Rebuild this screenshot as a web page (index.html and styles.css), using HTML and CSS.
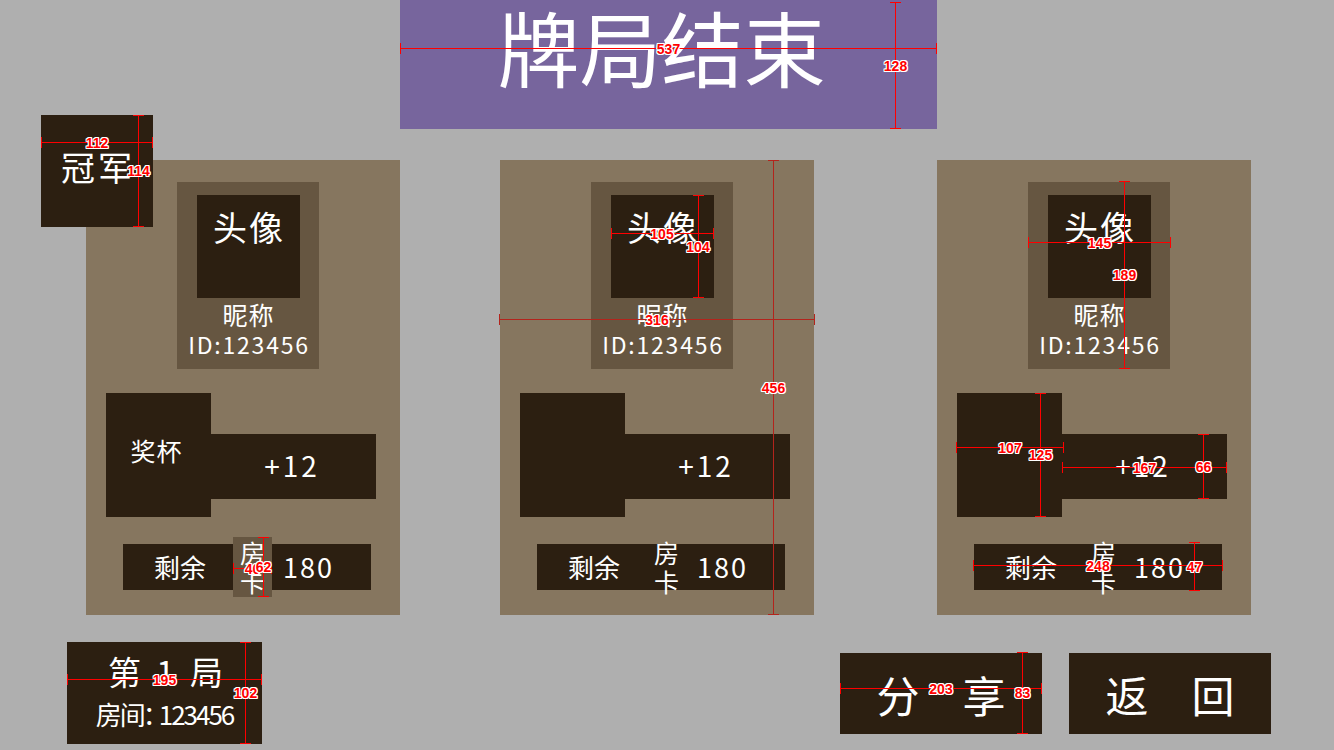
FILE: index.html
```html
<!DOCTYPE html>
<html lang="zh-CN">
<head>
<meta charset="utf-8">
<title>牌局结束</title>
<link rel="stylesheet" href="styles.css">
</head>
<body>
<div class="screen">
  <header class="title-bar">
    <h1 class="title">牌局结束</h1>
    <span class="dim dim-h dim-title-w"><b class="dim-label">537</b></span>
    <span class="dim dim-v dim-title-h"><b class="dim-label">128</b></span>
  </header>

  <main class="cards">
    <section class="card">
      <div class="badge">冠军
        <span class="dim dim-h dim-badge-w"><b class="dim-label">112</b></span>
        <span class="dim dim-v dim-badge-h"><b class="dim-label">114</b></span>
      </div>
      <div class="profile">
        <div class="avatar">头像</div>
        <div class="nickname">昵称</div>
        <div class="player-id">ID:123456</div>
      </div>
      <div class="stats">
        <div class="trophy"><span class="trophy-label">奖杯</span></div>
        <div class="score">+12</div>
      </div>
      <div class="remain-bar">
        <span class="remain">剩余</span>
        <span class="card-tag is-selected">房<br>卡
          <span class="dim dim-h dim-tag-w"><b class="dim-label">40</b></span>
          <span class="dim dim-v dim-tag-h"><b class="dim-label">62</b></span>
        </span>
        <span class="count">180</span>
      </div>
    </section>

    <section class="card card-mid">
      <div class="profile">
        <div class="avatar">头像
          <span class="dim dim-h dim-avatar-w"><b class="dim-label">105</b></span>
          <span class="dim dim-v dim-avatar-h"><b class="dim-label">104</b></span>
        </div>
        <div class="nickname">昵称</div>
        <div class="player-id">ID:123456</div>
      </div>
      <div class="stats">
        <div class="trophy"></div>
        <div class="score">+12</div>
      </div>
      <div class="remain-bar">
        <span class="remain">剩余</span>
        <span class="card-tag">房<br>卡</span>
        <span class="count">180</span>
      </div>
      <span class="dim dim-h dim-dark dim-card-w"><b class="dim-label">316</b></span>
      <span class="dim dim-v dim-dark dim-card-h"><b class="dim-label">456</b></span>
    </section>

    <section class="card card-right">
      <div class="profile">
        <div class="avatar">头像</div>
        <div class="nickname">昵称</div>
        <div class="player-id">ID:123456</div>
        <span class="dim dim-h dim-profile-w"><b class="dim-label">145</b></span>
        <span class="dim dim-v dim-profile-h"><b class="dim-label">189</b></span>
      </div>
      <div class="stats">
        <div class="trophy">
          <span class="dim dim-h dim-trophy-w"><b class="dim-label">107</b></span>
          <span class="dim dim-v dim-trophy-h"><b class="dim-label">125</b></span>
        </div>
        <div class="score">+12
          <span class="dim dim-h dim-score-w"><b class="dim-label">167</b></span>
          <span class="dim dim-v dim-score-h"><b class="dim-label">66</b></span>
        </div>
      </div>
      <div class="remain-bar">
        <span class="remain">剩余</span>
        <span class="card-tag">房<br>卡</span>
        <span class="count">180</span>
        <span class="dim dim-h dim-bar-w"><b class="dim-label">248</b></span>
        <span class="dim dim-v dim-bar-h"><b class="dim-label">47</b></span>
      </div>
    </section>
  </main>

  <footer class="footer">
    <div class="round">
      <div class="round-no">第 1 局</div>
      <div class="room-no">房间<span class="colon">：</span>123456</div>
      <span class="dim dim-h dim-round-w"><b class="dim-label">195</b></span>
      <span class="dim dim-v dim-round-h"><b class="dim-label">102</b></span>
    </div>
    <button class="btn btn-share">分　享
      <span class="dim dim-h dim-btn-w"><b class="dim-label">203</b></span>
      <span class="dim dim-v dim-btn-h"><b class="dim-label">83</b></span>
    </button>
    <button class="btn btn-back">返　回</button>
  </footer>
</div>
</body>
</html>
```

FILE: styles.css
```css
* { box-sizing: border-box; margin: 0; padding: 0; }
html, body { width: 1334px; height: 750px; overflow: hidden; }
body {
  background: #afafaf;
  color: #fff;
  font-family: "Noto Sans CJK SC", "Noto Sans", sans-serif;
}
.screen {
  display: flex;
  flex-direction: column;
  align-items: flex-start;
  width: 1334px;
  height: 750px;
}

/* title */
.title-bar {
  position: relative;
  margin-left: 400px;
  width: 537px;
  height: 129px;
  background: #77659d;
}
.title {
  font-size: 82px;
  font-weight: 400;
  line-height: 90px;
  padding-top: 1px;
  padding-right: 14px;
  text-align: center;
}

/* cards */
.cards {
  display: flex;
  margin-top: 31px;
  padding-left: 86px;
}
.card {
  position: relative;
  width: 314px;
  height: 455px;
  background: #86765f;
  padding-top: 22px;
}
.card-mid { margin-left: 100px; }
.card-right { margin-left: 123px; }

.badge {
  position: absolute;
  left: -45px;
  top: -45px;
  width: 112px;
  height: 112px;
  background: #2c1f11;
  display: flex;
  align-items: center;
  justify-content: center;
  font-size: 34px;
  line-height: 40px;
  letter-spacing: 3px;
  padding-left: 2px;
  padding-bottom: 8px;
  z-index: 2;
}

.profile {
  position: relative;
  margin-left: 91px;
  width: 142px;
  height: 187px;
  background: #665641;
  padding-top: 13px;
  display: flex;
  flex-direction: column;
  align-items: center;
}
.avatar {
  position: relative;
  width: 103px;
  height: 103px;
  background: #2c1f11;
  font-size: 34px;
  line-height: 34px;
  padding-top: 15px;
  padding-left: 2px;
  letter-spacing: 2px;
  text-align: center;
}
.nickname {
  margin-top: 1px;
  font-size: 25px;
  line-height: 30px;
  letter-spacing: 1px;
  padding-left: 1px;
}
.player-id {
  font-size: 23px;
  line-height: 30px;
  letter-spacing: 1.8px;
  padding-left: 2px;
}

.stats {
  display: flex;
  align-items: flex-start;
  margin-left: 20px;
  margin-top: 24px;
}
.trophy {
  position: relative;
  width: 105px;
  height: 124px;
  background: #2c1f11;
  padding-top: 42px;
  padding-right: 4px;
  text-align: center;
  font-size: 25px;
  line-height: 30px;
  letter-spacing: 1px;
}
.score {
  position: relative;
  width: 165px;
  height: 65px;
  margin-top: 41px;
  background: #2c1f11;
  display: flex;
  align-items: center;
  justify-content: center;
  font-size: 28px;
  line-height: 34px;
  letter-spacing: 3px;
  padding-right: 3px;
  padding-bottom: 4px;
}

.remain-bar {
  position: relative;
  display: flex;
  align-items: center;
  margin-left: 37px;
  margin-top: 27px;
  width: 248px;
  height: 46px;
  background: #2c1f11;
}
.remain {
  margin-left: 31px;
  font-size: 26px;
  line-height: 30px;
}
.card-tag {
  position: relative;
  flex: none;
  width: 39px;
  height: 60px;
  margin-left: 27px;
  padding-top: 1px;
  font-size: 25px;
  line-height: 29px;
  text-align: center;
}
.card-tag.is-selected { background: #665641; }
.count {
  margin-left: 11px;
  font-size: 27px;
  line-height: 30px;
  letter-spacing: 2px;
}

/* footer */
.footer {
  display: flex;
  align-items: flex-start;
  margin-top: 27px;
}
.round {
  position: relative;
  margin-left: 67px;
  width: 195px;
  height: 102px;
  background: #2c1f11;
  display: flex;
  flex-direction: column;
  align-items: center;
  padding-top: 9px;
}
.round-no {
  font-size: 33px;
  line-height: 40px;
  letter-spacing: 4px;
  padding-left: 6px;
}
.room-no {
  margin-top: 7px;
  font-size: 26px;
  line-height: 32px;
  letter-spacing: -2px;
}
.colon { margin-left: -1px; margin-right: -8px; }
.btn {
  position: relative;
  width: 202px;
  height: 81px;
  margin-top: 11px;
  border: 0;
  background: #2c1f11;
  color: #fff;
  font-family: inherit;
  font-size: 43px;
  line-height: 50px;
  display: flex;
  align-items: center;
  justify-content: center;
}
.btn-share { margin-left: 578px; }
.btn-back { margin-left: 27px; }

/* measurement overlay */
.dim {
  position: absolute;
  background: #f00;
  z-index: 5;
}
.dim-h { height: 1px; left: 0; right: 0; }
.dim-v { width: 1px; top: 0; bottom: 0; }
.dim-h::before, .dim-h::after {
  content: "";
  position: absolute;
  top: -5px;
  width: 1px;
  height: 11px;
  background: inherit;
}
.dim-h::before { left: 0; }
.dim-h::after { right: 0; }
.dim-v::before, .dim-v::after {
  content: "";
  position: absolute;
  left: -5px;
  width: 11px;
  height: 1px;
  background: inherit;
}
.dim-v::before { top: 0; }
.dim-v::after { bottom: 0; }
.dim-dark { background: #b3241c; }
.dim-label {
  position: absolute;
  left: 50%;
  top: 50%;
  transform: translate(-50%, -50%);
  font-family: "Liberation Sans", sans-serif;
  font-size: 14px;
  font-weight: 700;
  line-height: 1;
  letter-spacing: 0;
  color: #f00;
  white-space: nowrap;
  text-shadow: -1px 0 #fff, 1px 0 #fff, 0 -1px #fff, 0 1px #fff,
               -1px -1px #fff, 1px 1px #fff, -1px 1px #fff, 1px -1px #fff;
}

.dim-title-w { top: 48px; }
.dim-title-h { left: 495px; top: 2px; }
.dim-badge-w { top: 27px; }
.dim-badge-h { left: 97px; }
.dim-tag-w { top: 31px; }
.dim-tag-h { left: 30px; }
.dim-avatar-w { top: 38px; }
.dim-avatar-h { left: 87px; }
.dim-card-w { top: 159px; left: -1px; right: -1px; }
.dim-card-h { left: 273px; }
.dim-profile-w { top: 60px; right: -1px; }
.dim-profile-h { left: 96px; top: -1px; }
.dim-trophy-w { top: 54px; left: -1px; right: -2px; }
.dim-trophy-h { left: 83px; }
.dim-score-w { top: 33px; }
.dim-score-h { left: 141px; }
.dim-bar-w { top: 21px; left: -1px; right: -1px; }
.dim-bar-h { left: 220px; top: -2px; bottom: -1px; }
.dim-round-w { top: 37px; }
.dim-round-h { left: 178px; }
.dim-btn-w { top: 35px; }
.dim-btn-h { left: 182px; top: -1px; }
```
